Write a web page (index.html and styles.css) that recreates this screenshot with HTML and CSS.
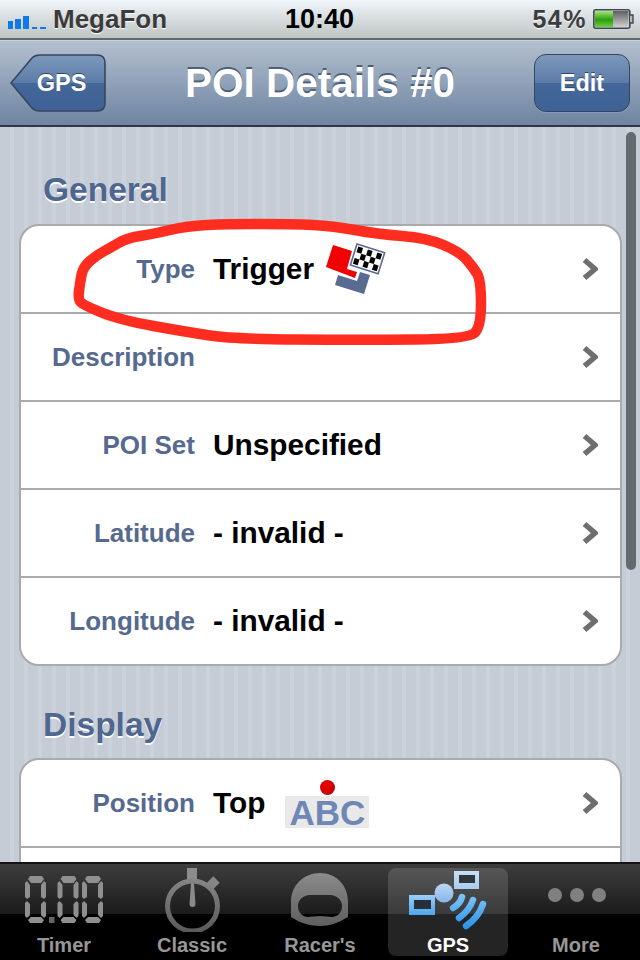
FILE: index.html
```html
<!DOCTYPE html>
<html lang="en">
<head>
<meta charset="utf-8">
<title>POI Details</title>
<link rel="stylesheet" href="styles.css">
</head>
<body>
<svg class="defs" width="0" height="0">
  <defs>
    <linearGradient id="tabGrey" gradientUnits="userSpaceOnUse" x1="0" y1="868" x2="0" y2="932">
      <stop offset="0" stop-color="#8f8f8f"/><stop offset="1" stop-color="#5a5a5a"/>
    </linearGradient>
    <linearGradient id="backFill" x1="0" y1="0" x2="0" y2="1">
      <stop offset="0" stop-color="#7d98bb"/><stop offset=".5" stop-color="#5b7ca8"/>
      <stop offset=".5" stop-color="#44679a"/><stop offset="1" stop-color="#3f6195"/>
    </linearGradient>
    <linearGradient id="arcBlue" gradientUnits="userSpaceOnUse" x1="0" y1="895" x2="0" y2="928">
      <stop offset="0" stop-color="#7cc6f6"/><stop offset="1" stop-color="#2a92ec"/>
    </linearGradient>
    <linearGradient id="boxBlue" x1="0" y1="0" x2="0" y2="1">
      <stop offset="0" stop-color="#9ccdf6"/><stop offset="1" stop-color="#4ea6ee"/>
    </linearGradient>
    <linearGradient id="boxPale" x1="0" y1="0" x2="0" y2="1">
      <stop offset="0" stop-color="#c8dff4"/><stop offset="1" stop-color="#a8cdf0"/>
    </linearGradient>
    <linearGradient id="ballBlue" x1="0" y1="0" x2="0" y2="1">
      <stop offset="0" stop-color="#bcd6f5"/><stop offset="1" stop-color="#88b6ec"/>
    </linearGradient>
    <g id="digit">
      <path d="M5 0H17L19 3L16 7H6L3 3Z"/>
      <path d="M0 7L2 5L5 9V21L2 23L0 21Z"/>
      <path d="M21 7L19 5L16 9V21L19 23L21 21Z"/>
      <path d="M0 27L2 25L5 28V39L2 42L0 40Z"/>
      <path d="M21 27L19 25L16 28V39L19 42L21 40Z"/>
      <path d="M6 41H16L19 44L17 47H5L3 44Z"/>
    </g>
    <symbol id="chev" viewBox="0 0 16 24">
      <path d="M2.500 3L13 12L2.500 21" fill="none" stroke="#6e6e6e" stroke-width="5.5"/>
    </symbol>
  </defs>
</svg>

<div class="phone">
  <header class="status">
    <div class="status-left">
      <svg class="signal" width="38" height="16" viewBox="0 0 38 16">
        <rect class="bar" x="0" y="8" width="5" height="8"/>
        <rect class="bar" x="7" y="6" width="6" height="10"/>
        <rect class="bar" x="15" y="3" width="6" height="13"/>
        <rect class="bar" x="24" y="14" width="5" height="2"/>
        <rect class="bar" x="32" y="14" width="6" height="2"/>
      </svg>
      <span class="carrier">MegaFon</span>
    </div>
    <div class="clock">10:40</div>
    <div class="status-right">
      <span class="percent">54%</span>
      <svg class="battery" width="42" height="22" viewBox="0 0 42 22">
        <defs>
          <linearGradient id="batGreen" x1="0" y1="0" x2="0" y2="1"><stop offset="0" stop-color="#a8e47c"/><stop offset=".55" stop-color="#2a9d0a"/><stop offset="1" stop-color="#6ad040"/></linearGradient>
          <linearGradient id="batGrey" x1="0" y1="0" x2="0" y2="1"><stop offset="0" stop-color="#5f5f5f"/><stop offset="1" stop-color="#cfcfcf"/></linearGradient>
        </defs>
        <rect x="0.800" y="1.800" width="36" height="18.400" rx="2" fill="#d8dcdc" stroke="#3f4756" stroke-width="1.6"/>
        <rect x="2" y="3" width="18" height="16" fill="url(#batGreen)"/>
        <rect x="20" y="3" width="15.500" height="16" fill="url(#batGrey)"/>
        <path d="M37 7H40V15H37" fill="#b4b9ba" stroke="#3f4756" stroke-width="1.4"/>
      </svg>
    </div>
  </header>

  <nav class="navbar">
    <a class="back">
      <svg class="back-shape" width="96" height="58" viewBox="0 0 96 58">
        <path d="M1 29L22 4Q25 1 30 1H87Q95 1 95 9V49Q95 57 87 57H30Q25 57 22 54Z" fill="url(#backFill)" stroke="#34465f" stroke-width="1.6"/>
      </svg>
      <span class="back-label">GPS</span>
    </a>
    <h1 class="title">POI Details #0</h1>
    <a class="edit">Edit</a>
  </nav>

  <main class="content">
    <section class="section">
      <h2 class="section-title">General</h2>
      <div class="group">
        <div class="row">
          <span class="label">Type</span>
          <span class="value">Trigger</span>
          <svg class="trigger-icon" width="62" height="54" viewBox="326 243 62 54">
            <polygon points="334,245 353,251 348,269 358,272 356,278 327,267" fill="#f00000"/>
            <polygon points="339,275 358,281 361,272 371,275 365,294 336,285" fill="#5a6b92"/>
            <g transform="translate(358 244) rotate(17.5)">
              <rect x="0" y="0" width="29" height="22" fill="#fff" stroke="#5a6b92" stroke-width="1.6"/>
              <rect class="chk" x="2" y="2" width="5" height="6"/><rect class="chk" x="12" y="2" width="5" height="6"/><rect class="chk" x="22" y="2" width="5" height="6"/>
              <rect class="chk" x="7" y="8" width="5" height="6"/><rect class="chk" x="17" y="8" width="5" height="6"/>
              <rect class="chk" x="2" y="14" width="5" height="6"/><rect class="chk" x="12" y="14" width="5" height="6"/><rect class="chk" x="22" y="14" width="5" height="6"/>
            </g>
          </svg>
          <svg class="chevron" width="16" height="24"><use href="#chev"/></svg>
        </div>
        <div class="row">
          <span class="label">Description</span>
          <span class="value"></span>
          <svg class="chevron" width="16" height="24"><use href="#chev"/></svg>
        </div>
        <div class="row">
          <span class="label">POI Set</span>
          <span class="value">Unspecified</span>
          <svg class="chevron" width="16" height="24"><use href="#chev"/></svg>
        </div>
        <div class="row">
          <span class="label">Latitude</span>
          <span class="value">- invalid -</span>
          <svg class="chevron" width="16" height="24"><use href="#chev"/></svg>
        </div>
        <div class="row">
          <span class="label">Longitude</span>
          <span class="value">- invalid -</span>
          <svg class="chevron" width="16" height="24"><use href="#chev"/></svg>
        </div>
      </div>
    </section>
    <section class="section">
      <h2 class="section-title">Display</h2>
      <div class="group">
        <div class="row">
          <span class="label">Position</span>
          <span class="value">Top</span>
          <span class="abc">ABC<i class="abc-dot"></i></span>
          <svg class="chevron" width="16" height="24"><use href="#chev"/></svg>
        </div>
        <div class="row"></div>
      </div>
    </section>
    <div class="scrollbar"></div>
  </main>

  <footer class="tabbar">
    <div class="tab">
      <svg class="tab-icon" width="128" height="66" viewBox="0 866 128 66" fill="url(#tabGrey)">
        <use href="#digit" x="25" y="876"/>
        <rect x="49" y="917" width="5.500" height="6"/>
        <use href="#digit" x="57.500" y="876"/>
        <use href="#digit" x="82" y="876"/>
      </svg>
      <span class="tab-label">Timer</span>
    </div>
    <div class="tab">
      <svg class="tab-icon" width="128" height="66" viewBox="128 866 128 66">
        <rect x="187" y="868" width="10" height="12" fill="#8c8c8c"/>
        <rect x="208.500" y="878" width="9" height="10" transform="rotate(45 213 883)" fill="#858585"/>
        <circle cx="192.500" cy="906" r="25" fill="none" stroke="url(#tabGrey)" stroke-width="5"/>
        <path d="M191 883H194L195.500 904Q195.500 907 192.500 907Q189.500 907 189.500 904Z" fill="#8a8a8a"/>
      </svg>
      <span class="tab-label">Classic</span>
    </div>
    <div class="tab">
      <svg class="tab-icon" width="128" height="66" viewBox="256 866 128 66">
        <path fill="url(#tabGrey)" fill-rule="evenodd" d="M291 917V902C291 885 304 873 320 873C336 873 348 885 348 902V917C338 923 330 926 320 926C310 926 300 923 291 917ZM310 895H330C337 895 342 900 342 906C342 913 337 917 332 917C325 916 315 916 308 917C302 917 298 912 298 906C298 900 303 895 310 895Z"/>
      </svg>
      <span class="tab-label">Racer's</span>
    </div>
    <div class="tab tab-active">
      <svg class="tab-icon" width="128" height="66" viewBox="384 866 128 66">
        <rect x="409" y="895" width="26" height="20" fill="url(#boxBlue)"/>
        <rect x="414" y="900" width="17" height="9" fill="#263038"/>
        <rect x="454" y="871" width="25" height="18" fill="url(#boxPale)"/>
        <rect x="459" y="875" width="16" height="8" fill="#30383f"/>
        <circle cx="444" cy="893" r="9.500" fill="url(#ballBlue)"/>
        <g fill="none" stroke="url(#arcBlue)" stroke-width="6.500" stroke-linecap="round">
          <path d="M453 908Q460 904 462 897"/>
          <path d="M459 918Q469 911 473 900"/>
          <path d="M466 926Q479 917 483 904"/>
        </g>
      </svg>
      <span class="tab-label">GPS</span>
    </div>
    <div class="tab">
      <svg class="tab-icon" width="128" height="66" viewBox="512 866 128 66" fill="#808080">
        <circle cx="555" cy="895" r="7"/>
        <circle cx="577" cy="895" r="7"/>
        <circle cx="599" cy="895" r="7"/>
      </svg>
      <span class="tab-label">More</span>
    </div>
  </footer>

  <svg class="annotation" width="640" height="960" viewBox="0 0 640 960">
    <path d="M80.500 302Q78 299 79 291Q80 283 81.500 275Q83 267 90 261Q97 255 103.500 251.500Q110 248 118.500 243Q127 238 140 236Q153 234 170 230Q187 226 207 225Q227 224 260 224Q293 224 313 225Q333 226 355 230Q377 234 402 236Q427 238 443.500 245Q460 252 466.500 259.500Q473 267 477 273.500Q481 280 481 303.500Q481 327 474.500 333Q468 339 414 339.500Q360 340 296.500 339.500Q233 339 210 335.500Q187 332 153.500 326Q120 320 101.500 312.500Q83 305 80.500 302Z" fill="none" stroke="#ff2d1f" stroke-width="10.500" stroke-linejoin="round"/>
  </svg>
</div>
</body>
</html>
```
FILE: styles.css
```css
* { box-sizing: border-box; }
html, body { margin: 0; padding: 0; }
body { font-family: "Liberation Sans", Arial, sans-serif; background: #000; }
.defs { position: absolute; }
.phone { position: relative; width: 640px; height: 960px; overflow: hidden; display: flex; flex-direction: column; }

.status { height: 40px; flex: none; display: grid; grid-template-columns: 1fr auto 1fr; align-items: center; padding: 0 5px 0 8px; background: linear-gradient(#f0f6f9, #bfc4c4); border-bottom: 2px solid #60676b; }
.status-left { display: flex; align-items: center; gap: 7px; }
.signal { margin-top: 4px; }
.bar { fill: #1277e8; }
.carrier { font-size: 26px; font-weight: bold; color: #3b3b3b; text-shadow: 0 1px 0 #fff; }
.clock { margin-right: 4px; font-size: 27px; font-weight: bold; color: #000; }
.status-right { display: flex; align-items: center; justify-content: flex-end; gap: 6px; }
.percent { font-size: 25px; font-weight: bold; color: #3d3d3d; letter-spacing: 1.5px; text-shadow: 0 1px 0 #fff; }

.navbar { height: 87px; flex: none; display: flex; align-items: center; justify-content: space-between; padding: 0 10px; background: linear-gradient(#b3bfce, #6d84a2); border-top: 1px solid #c8d0da; border-bottom: 2px solid #2d3642; }
.back { position: relative; width: 96px; height: 58px; display: flex; align-items: center; justify-content: center; }
.back-shape { position: absolute; left: 0; top: 0; }
.back-label { position: relative; margin-left: 7px; font-size: 23.5px; font-weight: bold; color: #fff; text-shadow: 0 -1px 0 #37475d; }
.title { margin: 0; font-size: 40.500px; font-weight: bold; color: #fff; text-shadow: 0 -2px 0 #4f5f77; }
.edit { width: 96px; height: 58px; display: flex; align-items: center; justify-content: center; font-size: 23.5px; font-weight: bold; color: #fff; text-shadow: 0 -1px 0 #37475d; border: 1.6px solid #34465f; border-radius: 12px; background: linear-gradient(#7d98bb, #5b7ca8 50%, #44679a 50%, #3f6195); box-shadow: 0 1px 0 #8a9db6; }

.content { position: relative; flex: 1; overflow: hidden; padding: 0 18px 0 19px; background: repeating-linear-gradient(90deg, #c5ccd6 0, #c5ccd6 10px, #cad2db 10px, #cad2db 14px); }
.section-title { margin: 0; height: 97px; padding: 45px 0 0 24px; font-size: 33.5px; line-height: 36px; font-weight: bold; color: #4f668f; text-shadow: 0 2px 0 #fff; }
.section + .section .section-title { height: 92px; padding-top: 41px; }
.group { background: #fff; border: 2px solid #a8aaac; border-radius: 20px; overflow: hidden; }
.row { height: 88px; display: flex; align-items: center; padding-right: 22px; border-bottom: 2px solid #a8aaac; }
.row:last-child { border-bottom: 0; height: 86px; }
.label { width: 174px; flex: none; text-align: right; font-size: 26px; font-weight: bold; color: #56698f; }
.value { margin-left: 18px; font-size: 29.800px; font-weight: bold; color: #000; }
.chevron { margin-left: auto; flex: none; }
.trigger-icon { margin: 1px 0 0 11px; flex: none; }
.abc { position: relative; width: 84px; height: 32px; margin: 18px 0 0 20px; background: #e9e9e9; font-size: 35px; line-height: 33px; font-weight: bold; color: #6f87b5; text-align: center; }
.abc-dot { position: absolute; left: 35px; top: -16px; width: 15px; height: 15px; border-radius: 50%; background: radial-gradient(circle at 40% 35%, #f00000, #b00000); }
.chk { fill: #000; }
.scrollbar { position: absolute; left: 626px; top: 5px; width: 10px; height: 438px; border-radius: 5px; background: #646a70; }

.tabbar { height: 98px; flex: none; display: grid; grid-template-columns: repeat(5, 128px); background: linear-gradient(#3c3c3c 2px, #1b1b1b 50px, #000 50px); border-top: 2px solid #141414; }
.tab { position: relative; display: flex; flex-direction: column; align-items: center; padding-top: 2px; }
.tab-active::before { content: ""; position: absolute; left: 4px; right: 4px; top: 4px; bottom: 4px; border-radius: 8px; background: rgba(255, 255, 255, .14); }
.tab-icon { position: relative; display: block; }
.tab-label { position: relative; margin-top: 1px; font-size: 20px; line-height: 24px; font-weight: bold; color: #979797; }
.tab-active .tab-label { color: #fff; }

.annotation { position: absolute; left: 0; top: 0; pointer-events: none; }
```
